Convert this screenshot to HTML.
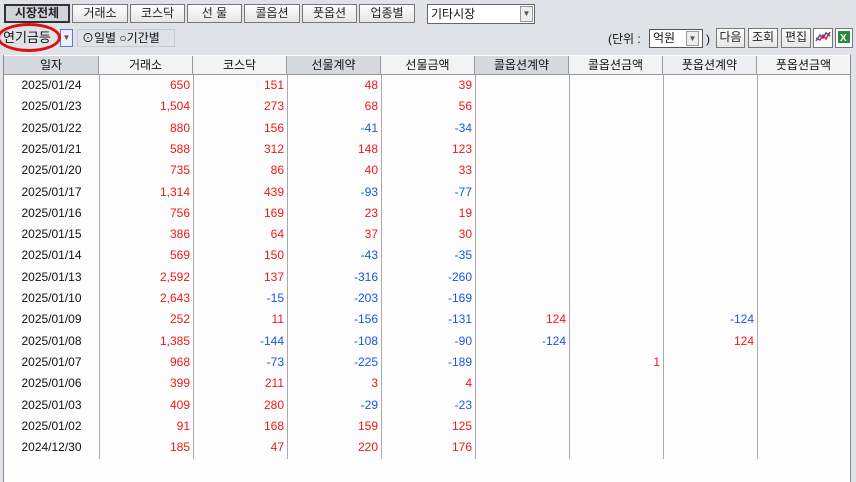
<!DOCTYPE html>
<html><head><meta charset="utf-8">
<style>
*{margin:0;padding:0;box-sizing:border-box}
body{width:856px;height:482px;background:#dfe2e7;font-family:"Liberation Sans","Noto Sans CJK KR","NanumGothic",sans-serif;font-size:12px;color:#111;position:relative;overflow:hidden}
.a{position:absolute}
.btn{position:absolute;top:4px;height:19px;border:1px solid #777;background:linear-gradient(#fdfdfd,#e6e6e6);text-align:center;line-height:17px;font-size:12px;color:#222}
.sel{background:#d0d4da;font-weight:bold;border:2px solid #333;line-height:15px}
.tbl{position:absolute;left:3px;top:55px;width:848px;height:427px;background:#fdfdfd;border-left:1px solid #888;border-right:1px solid #888}
.hd{position:absolute;top:1px;height:19px;line-height:19px;text-align:center;border-right:1px solid #999;border-bottom:1px solid #999;font-size:12px}
.vl{position:absolute;top:20px;width:1px;height:384px;background:#aaa}
.c{position:absolute;text-align:right;height:20px;line-height:20px;font-size:12px}
.r{color:#f01818}.b{color:#1a55e8}
</style></head><body>
<div class="btn sel" style="left:4px;width:66px">시장전체</div>
<div class="btn" style="left:72px;width:56px">거래소</div>
<div class="btn" style="left:130px;width:55px">코스닥</div>
<div class="btn" style="left:187px;width:55px">선 물</div>
<div class="btn" style="left:244px;width:56px">콜옵션</div>
<div class="btn" style="left:302px;width:55px">풋옵션</div>
<div class="btn" style="left:359px;width:56px">업종별</div>
<div class="a" style="left:427px;top:4px;width:108px;height:20px;border:1px solid #666;background:#fff;line-height:18px;padding-left:3px">기타시장</div>
<div class="a" style="left:520px;top:6px;width:13px;height:16px;border:1px solid #999;background:#eee;font-size:8px;text-align:center;line-height:14px;color:#555">▼</div>

<div class="a" style="left:3px;top:29px;width:56px;height:18px;line-height:18px;font-size:13px">연기금등</div>
<div class="a" style="left:60px;top:29px;width:13px;height:18px;border:1px solid #5a7bd0;background:#eef;font-size:8px;text-align:center;line-height:16px;color:#555">▼</div>
<div class="a" style="left:-3px;top:23px;width:64px;height:29px;border:3px solid #e01010;border-radius:50%"></div>
<div class="a" style="left:77px;top:29px;width:98px;height:18px;border:1px solid #c8ccd2;line-height:16px;padding-left:4px;font-size:12px">⊙일별 ○기간별</div>

<div class="a" style="left:608px;top:31px;line-height:16px">(단위 :</div>
<div class="a" style="left:649px;top:29px;width:54px;height:19px;border:1px solid #555;background:#fff;line-height:17px;padding-left:3px">억원</div>
<div class="a" style="left:686px;top:31px;width:13px;height:15px;border:1px solid #999;background:#eee;font-size:8px;text-align:center;line-height:13px;color:#555">▼</div>
<div class="a" style="left:706px;top:31px;line-height:16px">)</div>
<div class="btn" style="left:716px;top:28px;width:29px;height:20px">다음</div>
<div class="btn" style="left:748px;top:28px;width:30px;height:20px">조회</div>
<div class="btn" style="left:781px;top:28px;width:30px;height:20px">편집</div>
<div class="btn" style="left:813px;top:28px;width:20px;height:20px;background:#fff"><svg width="16" height="16" viewBox="0 0 16 16"><polyline points="1,12 5,6 8,9 11,4 15,7" fill="none" stroke="#2050e0" stroke-width="1.5"/><polyline points="1,9 5,11 8,6 11,10 15,3" fill="none" stroke="#e02020" stroke-width="1.5"/></svg></div>
<div class="btn" style="left:835px;top:28px;width:18px;height:20px;background:#fff"><svg width="14" height="16" viewBox="0 0 14 16"><rect x="1" y="2" width="12" height="12" fill="#2a8a3a"/><text x="3" y="12" font-size="10" fill="#fff" font-family="Liberation Sans" font-weight="bold">X</text></svg></div>

<div class="tbl">
<div class="hd" style="left:0;width:95px;background:#d6d9de">일자</div>
<div class="hd" style="left:95px;width:94px;background:#f2f3f5">거래소</div>
<div class="hd" style="left:189px;width:94px;background:#f2f3f5">코스닥</div>
<div class="hd" style="left:283px;width:94px;background:#d6d9de">선물계약</div>
<div class="hd" style="left:377px;width:94px;background:#f2f3f5">선물금액</div>
<div class="hd" style="left:471px;width:94px;background:#d6d9de">콜옵션계약</div>
<div class="hd" style="left:565px;width:94px;background:#f2f3f5">콜옵션금액</div>
<div class="hd" style="left:659px;width:94px;background:#eceef1">풋옵션계약</div>
<div class="hd" style="left:753px;width:93px;background:#f2f3f5;border-right:none">풋옵션금액</div>
<div class="vl" style="left:95px"></div><div class="vl" style="left:189px"></div><div class="vl" style="left:283px"></div><div class="vl" style="left:377px"></div><div class="vl" style="left:471px"></div><div class="vl" style="left:565px"></div><div class="vl" style="left:659px"></div><div class="vl" style="left:753px"></div>
<div id="rows"></div>
</div>
<script>
var d=[["2025/01/24",650,151,48,39],["2025/01/23","1,504",273,68,56],["2025/01/22",880,156,-41,-34],["2025/01/21",588,312,148,123],["2025/01/20",735,86,40,33],["2025/01/17","1,314",439,-93,-77],["2025/01/16",756,169,23,19],["2025/01/15",386,64,37,30],["2025/01/14",569,150,-43,-35],["2025/01/13","2,592",137,-316,-260],["2025/01/10","2,643",-15,-203,-169],["2025/01/09",252,11,-156,-131,124,"",-124],["2025/01/08","1,385",-144,-108,-90,-124,"",124],["2025/01/07",968,-73,-225,-189,"",1],["2025/01/06",399,211,3,4],["2025/01/03",409,280,-29,-23],["2025/01/02",91,168,159,125],["2024/12/30",185,47,220,176]];
var h="",L=[95,189,283,377,471,565,659,753];
d.forEach(function(r,i){var t=20+i*21.3;
h+='<div class="c" style="left:0;width:95px;text-align:center;top:'+t+'px">'+r[0]+'</div>';
for(var j=1;j<r.length;j++){if(r[j]==="")continue;var v=String(r[j]);var cl=v[0]=="-"?"b":"r";
h+='<div class="c '+cl+'" style="left:'+L[j-1]+'px;width:91px;top:'+t+'px">'+v+'</div>';}});
document.getElementById("rows").innerHTML=h;
</script>
</body></html>
